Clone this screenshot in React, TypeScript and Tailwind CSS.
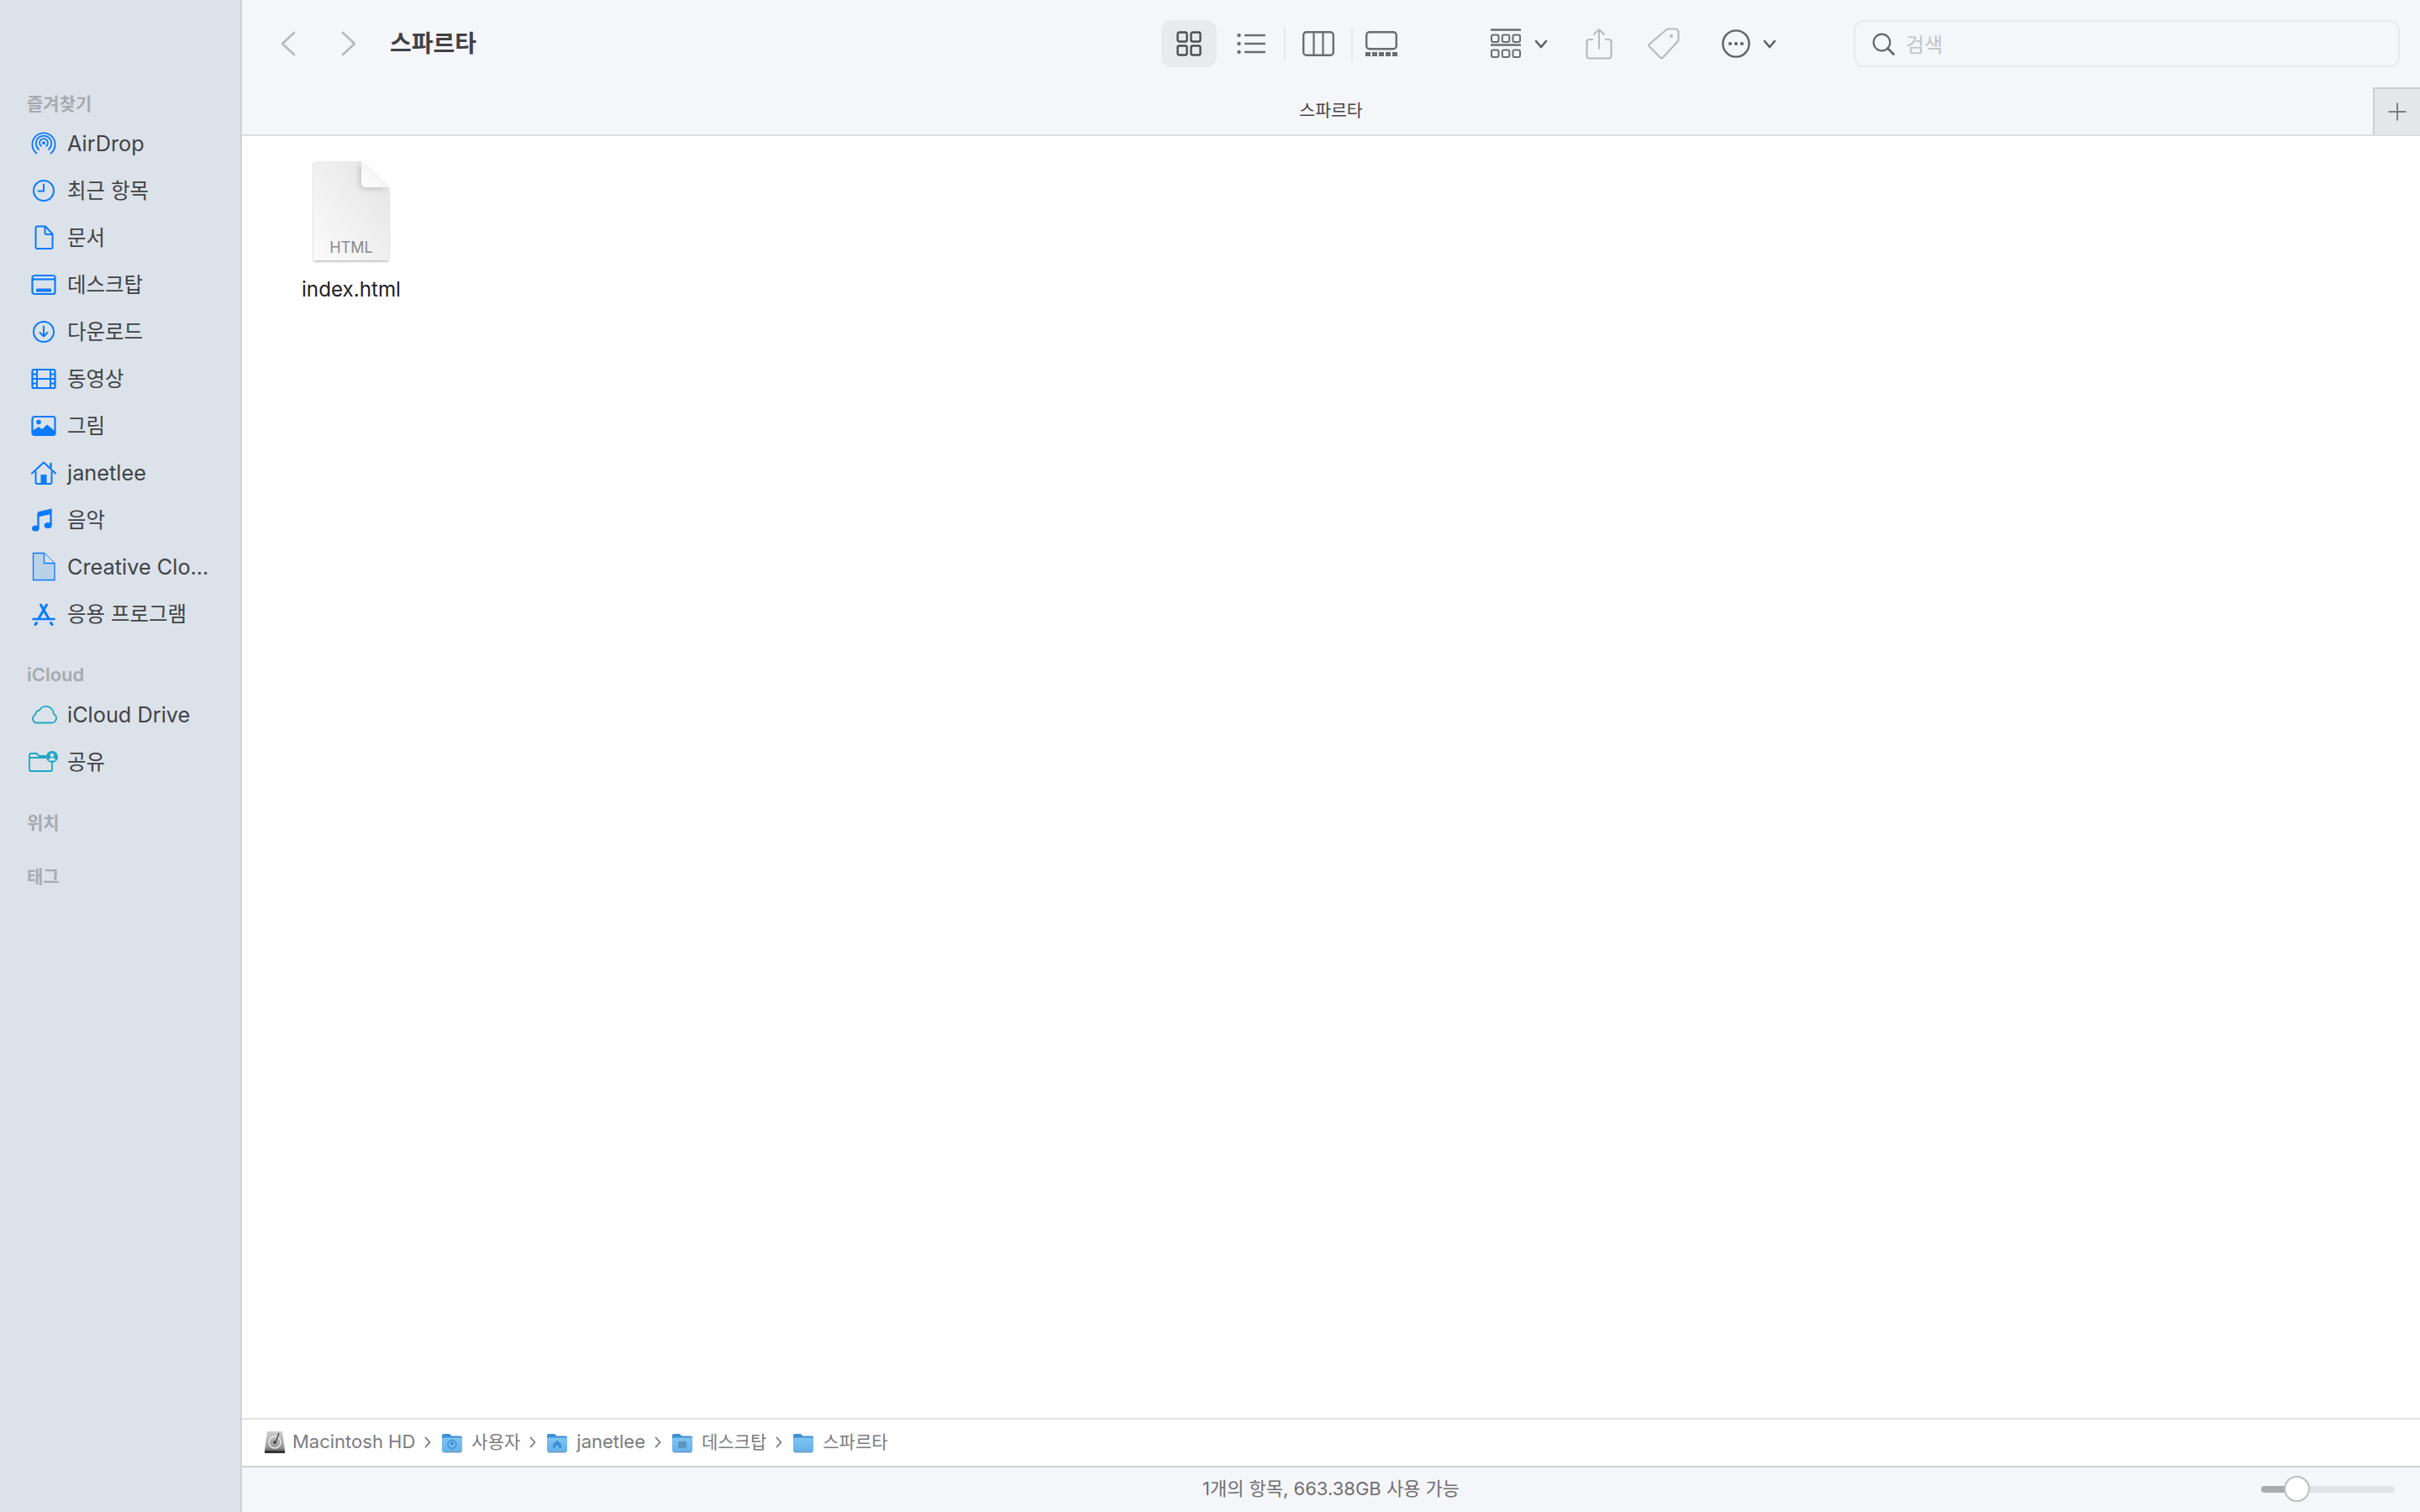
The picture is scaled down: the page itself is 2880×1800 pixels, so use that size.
import type { ReactNode } from "react";

const BLUE = "#0a7aff";
const TEAL = "#1ea6c6";

function Svg({ w = 32, h = 32, children }: { w?: number; h?: number; children: ReactNode }) {
  return (
    <svg width={w} height={h} viewBox={`0 0 ${w} ${h}`} fill="none" className="shrink-0 block">
      {children}
    </svg>
  );
}

// sidebar icons
const AirDropIcon = () => (
  <Svg>
    <g stroke={BLUE} strokeWidth="1.8" strokeLinecap="round">
      <path d="M7.5 27.5A13.6 13.6 0 1 1 24.5 27.5" />
      <path d="M10 22.8A9.2 9.2 0 1 1 22 22.8" />
      <path d="M12.8 18.8A4.9 4.9 0 1 1 19.2 18.8" />
    </g>
    <circle cx="16" cy="15.2" r="1.9" fill={BLUE} />
  </Svg>
);
const ClockIcon = () => (
  <Svg>
    <circle cx="16" cy="16" r="12" stroke={BLUE} strokeWidth="2" />
    <path d="M16 8.5V16.5H9.5" stroke={BLUE} strokeWidth="2" strokeLinecap="round" strokeLinejoin="round" />
  </Svg>
);
const DocIcon = () => (
  <Svg>
    <path d="M8.5 2.5H18L26.5 11.5V27A2 2 0 0 1 24.5 29H8.5A2 2 0 0 1 6.5 27V4.5A2 2 0 0 1 8.5 2.5Z" stroke={BLUE} strokeWidth="2" strokeLinejoin="round" />
    <path d="M17.5 3V10A2 2 0 0 0 19.5 12H26" stroke={BLUE} strokeWidth="2" />
  </Svg>
);
const DesktopIcon = () => (
  <Svg>
    <rect x="2.5" y="5" width="27" height="22" rx="2.5" stroke={BLUE} strokeWidth="2.2" />
    <path d="M3 9.5H29" stroke={BLUE} strokeWidth="2.2" />
    <rect x="7" y="20.5" width="18" height="4" rx="1" fill={BLUE} />
  </Svg>
);
const DownloadIcon = () => (
  <Svg>
    <circle cx="16" cy="16" r="12" stroke={BLUE} strokeWidth="2" />
    <path d="M16 9.5V21.5M11.5 17L16 21.5L20.5 17" stroke={BLUE} strokeWidth="2" strokeLinecap="round" strokeLinejoin="round" />
  </Svg>
);
const FilmIcon = () => (
  <Svg>
    <rect x="2.5" y="5" width="27" height="22" rx="1.5" stroke={BLUE} strokeWidth="2.2" />
    <path d="M8 5V27M24 5V27M8 16H24M3 10.5H8M3 16H8M3 21.5H8M24 10.5H29M24 16H29M24 21.5H29" stroke={BLUE} strokeWidth="2" />
  </Svg>
);
const PhotoIcon = () => (
  <Svg>
    <rect x="2.5" y="5" width="27" height="22" rx="2.5" stroke={BLUE} strokeWidth="2.2" />
    <circle cx="10" cy="11.5" r="2.8" fill={BLUE} />
    <path d="M3 26V21.5L10 17L14 20L20 14.5L29 22V26Z" fill={BLUE} />
  </Svg>
);
const HomeIcon = () => (
  <Svg>
    <path d="M2 16.5L16 3.5L30 16.5" stroke={BLUE} strokeWidth="2" strokeLinecap="round" strokeLinejoin="round" />
    <path d="M24.5 9V5" stroke={BLUE} strokeWidth="2.5" strokeLinecap="round" />
    <path d="M6.5 14V27A2 2 0 0 0 8.5 29H23.5A2 2 0 0 0 25.5 27V14" stroke={BLUE} strokeWidth="2" />
    <rect x="12.5" y="18" width="7" height="11" fill={BLUE} />
  </Svg>
);
const MusicIcon = () => (
  <Svg>
    <path d="M9.5 7.5L24.5 4V22" stroke={BLUE} strokeWidth="2.4" />
    <path d="M9.5 7.5V26" stroke={BLUE} strokeWidth="2.4" />
    <path d="M9.5 7.5L24.5 4V9L9.5 12.5Z" fill={BLUE} />
    <ellipse cx="6.3" cy="26" rx="4.3" ry="3.5" fill={BLUE} />
    <ellipse cx="21.1" cy="22.5" rx="4.5" ry="3.5" fill={BLUE} />
  </Svg>
);
const CloudDocIcon = () => (
  <svg width="32" height="36" viewBox="0 0 32 36" fill="none" className="shrink-0 block">
    <path d="M3.5 1.5H16.5L29 13.5V33.5H3.5Z" fill="#b9d2e9" stroke={BLUE} strokeWidth="1.3" />
    <path d="M16.5 1.5V13.5H29" fill="#dce2e9" stroke={BLUE} strokeWidth="1.3" />
  </svg>
);
const AppsIcon = () => (
  <Svg>
    <g stroke={BLUE} strokeLinecap="round">
      <path d="M19.5 5L10 21.5M7.5 26.5L6 28.5" strokeWidth="3" />
      <path d="M12.5 5L22 21.5M24.5 26.5L26 28.5" strokeWidth="3" />
      <path d="M3.5 22H28.5" strokeWidth="2.6" />
    </g>
  </Svg>
);
const CloudIcon = () => (
  <svg width="34" height="32" viewBox="0 0 34 32" fill="none" className="shrink-0 block">
    <path d="M8.5 25.5H26.5A5.5 5.5 0 0 0 28.8 15A9 9 0 0 0 12 10.5A6.5 6.5 0 0 0 7 16A5 5 0 0 0 8.5 25.5Z" stroke={TEAL} strokeWidth="1.8" strokeLinejoin="round" />
  </svg>
);
const SharedIcon = () => (
  <svg width="36" height="32" viewBox="0 0 36 32" fill="none" className="shrink-0 block">
    <path d="M1 8V25A2 2 0 0 0 3 27H26A2 2 0 0 0 28 25V17M1 11H21M1 8A2 2 0 0 1 3 6H9.5L12.5 9H21" stroke={TEAL} strokeWidth="1.8" strokeLinejoin="round" />
    <circle cx="28" cy="10" r="7" fill={TEAL} />
    <circle cx="28" cy="8" r="2.3" fill="#dce2e9" />
    <path d="M24 14.5A4 3.5 0 0 1 32 14.5Z" fill="#dce2e9" />
  </svg>
);

const FAVORITES = [
  { icon: AirDropIcon, label: "AirDrop", latin: true },
  { icon: ClockIcon, label: "최근 항목" },
  { icon: DocIcon, label: "문서" },
  { icon: DesktopIcon, label: "데스크탑" },
  { icon: DownloadIcon, label: "다운로드" },
  { icon: FilmIcon, label: "동영상" },
  { icon: PhotoIcon, label: "그림" },
  { icon: HomeIcon, label: "janetlee", latin: true },
  { icon: MusicIcon, label: "음악" },
  { icon: CloudDocIcon, label: "Creative Clo...", latin: true },
  { icon: AppsIcon, label: "응용 프로그램" },
];

const ICLOUD = [
  { icon: CloudIcon, label: "iCloud Drive", latin: true },
  { icon: SharedIcon, label: "공유" },
];

function SideHeading({ children, className = "" }: { children: ReactNode; className?: string }) {
  return (
    <div className={`h-[40px] pl-[32px] flex items-center font-semibold text-[#a5abb1] ${className}`}>
      {children}
    </div>
  );
}

function SideRow({ icon: Icon, label, latin }: { icon: () => ReactNode; label: string; latin?: boolean }) {
  return (
    <div className="h-[56px] pl-[36px] flex items-center text-[#3f4347]">
      <div className="w-[32px] flex justify-center">
        <Icon />
      </div>
      <span className={latin ? "ml-[12px] text-[25.3px]" : "ml-[12px] text-[24.5px]"}>{label}</span>
    </div>
  );
}

function Sidebar() {
  return (
    <aside className="w-[288px] shrink-0 bg-[#dce2e9] border-r-2 border-[#ced3d9] pt-[103px]">
      <SideHeading className="text-[21px] pt-[2px]">즐겨찾기</SideHeading>
      {FAVORITES.map((f) => (
        <SideRow key={f.label} icon={f.icon} label={f.label} latin={f.latin} />
      ))}
      <SideHeading className="mt-[24px] text-[22px]">iCloud</SideHeading>
      {ICLOUD.map((f) => (
        <SideRow key={f.label} icon={f.icon} label={f.label} latin={f.latin} />
      ))}
      <SideHeading className="mt-[25px] text-[21px]">위치</SideHeading>
      <SideHeading className="mt-[24px] text-[21px]">태그</SideHeading>
    </aside>
  );
}

// toolbar icons
const Chevron = ({ dir }: { dir: "left" | "right" }) => (
  <svg width="18" height="30" viewBox="0 0 18 30" fill="none" className="shrink-0 block">
    <path d={dir === "left" ? "M16 2L2 15L16 28" : "M2 2L16 15L2 28"} stroke="#b8b9bb" strokeWidth="2.6" strokeLinecap="round" strokeLinejoin="round" />
  </svg>
);
const SmallChevron = () => (
  <svg width="16" height="11" viewBox="0 0 16 11" fill="none" className="shrink-0 block">
    <path d="M2 2L8 9L14 2" stroke="#5f6064" strokeWidth="2.6" strokeLinecap="round" strokeLinejoin="round" />
  </svg>
);

function Toolbar() {
  return (
    <header className="bg-[#f5f6fa] border-b-2 border-[#dddee1] shrink-0">
      <div className="h-[104px] flex items-center">
        <div className="ml-[46px]">
          <Chevron dir="left" />
        </div>
        <div className="ml-[54px]">
          <Chevron dir="right" />
        </div>
        <div className="ml-[40px] w-[918px] text-[28px] leading-none font-semibold text-[#404144]">스파르타</div>

        <div className="w-[66px] h-[56px] rounded-[12px] bg-[#e9eaee] flex items-center justify-center">
          <svg width="30" height="30" viewBox="0 0 30 30" fill="none" className="block">
            <g stroke="#4d4e52" strokeWidth="2.4">
              <rect x="1.5" y="1.5" width="11" height="11" rx="2" />
              <rect x="17.5" y="1.5" width="11" height="11" rx="2" />
              <rect x="1.5" y="17.5" width="11" height="11" rx="2" />
              <rect x="17.5" y="17.5" width="11" height="11" rx="2" />
            </g>
          </svg>
        </div>
        <div className="ml-[24px]">
          <svg width="34" height="26" viewBox="0 0 34 26" fill="none" className="block">
            <g fill="#6b6c70">
              <circle cx="2.5" cy="3" r="2.2" />
              <circle cx="2.5" cy="13" r="2.2" />
              <circle cx="2.5" cy="23" r="2.2" />
            </g>
            <path d="M10 3H33M10 13H33M10 23H33" stroke="#6b6c70" strokeWidth="2.4" strokeLinecap="round" />
          </svg>
        </div>
        <div className="ml-[22px] w-[2px] h-[40px] bg-[#e6e7ea]" />
        <div className="ml-[20px]">
          <svg width="38" height="30" viewBox="0 0 38 30" fill="none" className="block">
            <rect x="1.2" y="1.2" width="35.6" height="27.6" rx="3.5" stroke="#6b6c70" strokeWidth="2.4" />
            <path d="M13.5 1V29M24.5 1V29" stroke="#6b6c70" strokeWidth="2.2" />
          </svg>
        </div>
        <div className="ml-[20px] w-[2px] h-[40px] bg-[#e6e7ea]" />
        <div className="ml-[15px]">
          <svg width="38" height="30" viewBox="0 0 38 30" fill="none" className="block">
            <rect x="1.2" y="1.2" width="35.6" height="20" rx="3.5" stroke="#6b6c70" strokeWidth="2.4" />
            <g fill="#6b6c70">
              <rect x="0" y="25" width="6" height="5" />
              <rect x="8" y="25" width="6" height="5" />
              <rect x="16" y="25" width="6" height="5" />
              <rect x="24" y="25" width="6" height="5" />
              <rect x="32" y="25" width="6" height="5" />
            </g>
          </svg>
        </div>

        <div className="ml-[111px]">
          <svg width="36" height="36" viewBox="0 0 36 36" fill="none" className="block">
            <path d="M0 1.5H36M0 19.5H36" stroke="#6b6c70" strokeWidth="2.4" />
            <g stroke="#6b6c70" strokeWidth="2">
              <rect x="1" y="7.5" width="8.5" height="8.5" rx="2" />
              <rect x="13.8" y="7.5" width="8.5" height="8.5" rx="2" />
              <rect x="26.5" y="7.5" width="8.5" height="8.5" rx="2" />
              <rect x="1" y="25.5" width="8.5" height="8.5" rx="2" />
              <rect x="13.8" y="25.5" width="8.5" height="8.5" rx="2" />
              <rect x="26.5" y="25.5" width="8.5" height="8.5" rx="2" />
            </g>
          </svg>
        </div>
        <div className="ml-[16px]">
          <SmallChevron />
        </div>
        <div className="ml-[45px]">
          <svg width="32" height="38" viewBox="0 0 32 38" fill="none" className="block">
            <path d="M9 14H4.5A3 3 0 0 0 1.5 17V33.5A3 3 0 0 0 4.5 36.5H27.5A3 3 0 0 0 30.5 33.5V17A3 3 0 0 0 27.5 14H23" stroke="#b9babc" strokeWidth="2.2" />
            <path d="M16 25V2M10 8L16 2L22 8" stroke="#b9babc" strokeWidth="2" strokeLinecap="round" strokeLinejoin="round" />
          </svg>
        </div>
        <div className="ml-[42px]">
          <svg width="38" height="38" viewBox="0 0 38 38" fill="none" className="block">
            <path d="M25 1.5H33A3.5 3.5 0 0 1 36.5 5V14A4 4 0 0 1 35.5 16.5L18 35.5A2 2 0 0 1 15 35.5L2 22.5A2 2 0 0 1 2 19.5L22 2.5A4 4 0 0 1 25 1.5Z" stroke="#b9babc" strokeWidth="2.2" strokeLinejoin="round" />
            <circle cx="28" cy="10" r="2" fill="#b9babc" />
          </svg>
        </div>
        <div className="ml-[50px]">
          <svg width="34" height="34" viewBox="0 0 34 34" fill="none" className="block">
            <circle cx="17" cy="17" r="15.6" stroke="#5f6064" strokeWidth="2.4" />
            <g fill="#5f6064">
              <circle cx="10" cy="17" r="2.1" />
              <circle cx="17" cy="17" r="2.1" />
              <circle cx="24" cy="17" r="2.1" />
            </g>
          </svg>
        </div>
        <div className="ml-[15px]">
          <SmallChevron />
        </div>

        <div className="ml-auto mr-[24px] w-[650px] h-[56px] rounded-[12px] border-2 border-[#e8e9ed] flex items-center pl-[20px]">
          <svg width="27" height="27" viewBox="0 0 27 27" fill="none" className="shrink-0 block">
            <circle cx="11.5" cy="11.5" r="9.8" stroke="#66676b" strokeWidth="2.2" />
            <path d="M18.5 18.5L25.5 25.5" stroke="#66676b" strokeWidth="2.8" strokeLinecap="round" />
          </svg>
          <span className="ml-[13px] pt-[3px] text-[24px] leading-none text-[#c2c3c6]">검색</span>
        </div>
      </div>
      <div className="h-[56px] grid grid-cols-[56px_1fr_56px]">
        <div />
        <div className="flex items-center justify-center text-[20.5px] text-[#45464a]">스파르타</div>
        <div className="bg-[#e6e7eb] border-l-2 border-t-2 border-[#cbccd0] flex items-center justify-center">
          <svg width="24" height="24" viewBox="0 0 24 24" fill="none" className="block">
            <path d="M12 1.5V22.5M1.5 12H22.5" stroke="#7d7e82" strokeWidth="2" />
          </svg>
        </div>
      </div>
    </header>
  );
}

function HtmlFile() {
  return (
    <div className="relative w-[94px] h-[124px]">
      <svg width="94" height="124" viewBox="0 0 94 124" fill="none" className="block">
        <defs>
          <linearGradient id="page" x1="0" y1="1" x2="1" y2="0">
            <stop offset="0" stopColor="#fbfbfb" />
            <stop offset="1" stopColor="#e4e4e4" />
          </linearGradient>
          <linearGradient id="fold" x1="0" y1="1" x2="1" y2="0">
            <stop offset="0" stopColor="#ffffff" />
            <stop offset="1" stopColor="#ececec" />
          </linearGradient>
          <filter id="soft" x="-10%" y="-10%" width="120%" height="120%">
            <feDropShadow dx="0" dy="1.5" stdDeviation="1.2" floodColor="#000" floodOpacity="0.28" />
          </filter>
          <filter id="foldShadow" x="-40%" y="-40%" width="180%" height="180%">
            <feDropShadow dx="-2" dy="2" stdDeviation="3" floodColor="#000" floodOpacity="0.18" />
          </filter>
        </defs>
        <path d="M5 2H59L92 33V117A3 3 0 0 1 89 120H5A3 3 0 0 1 2 117V5A3 3 0 0 1 5 2Z" fill="url(#page)" filter="url(#soft)" />
        <path d="M59 2V28A5 5 0 0 0 64 33H92Z" fill="url(#fold)" filter="url(#foldShadow)" />
      </svg>
      <span className="absolute left-0 right-0 top-[94px] text-center text-[18px] leading-[22px] text-[#8a8a8c]">HTML</span>
    </div>
  );
}

function Folder({ glyph }: { glyph?: "user" | "home" | "desk" }) {
  return (
    <svg width="26" height="26" viewBox="0 0 26 26" fill="none" className="shrink-0 block">
      <defs>
        <linearGradient id="folderBody" x1="0" y1="0" x2="0" y2="1">
          <stop offset="0" stopColor="#7fc4f3" />
          <stop offset="1" stopColor="#64b1e9" />
        </linearGradient>
      </defs>
      <path d="M1 5A2 2 0 0 1 3 3H10L12.5 5.5H23A2 2 0 0 1 25 7.5V12H1Z" fill="#3f8fd2" />
      <rect x="1" y="7.5" width="24" height="17" rx="1.5" fill="url(#folderBody)" />
      <path d="M2.5 24.8H23.5" stroke="#4a7ea8" strokeWidth="1" />
      {glyph === "user" && (
        <g stroke="#3f8fd2" strokeWidth="1.3">
          <circle cx="13" cy="15.5" r="5" />
          <circle cx="13" cy="14.5" r="1.4" fill="#3f8fd2" />
        </g>
      )}
      {glyph === "home" && <path d="M13 10.5L18 15.5V20H15V17H11V20H8V15.5Z" fill="#3f8fd2" />}
      {glyph === "desk" && <rect x="8" y="12" width="10" height="8" rx="1" fill="#5c96c4" />}
    </svg>
  );
}

function HardDrive() {
  return (
    <svg width="26" height="28" viewBox="0 0 26 28" fill="none" className="shrink-0 block">
      <defs>
        <linearGradient id="hd" x1="0" y1="0" x2="0" y2="1">
          <stop offset="0" stopColor="#d0d0d0" />
          <stop offset="0.7" stopColor="#9b9b9b" />
          <stop offset="1" stopColor="#4e4e4e" />
        </linearGradient>
      </defs>
      <path d="M4 1H22L25 24V27H1V24Z" fill="url(#hd)" />
      <circle cx="13" cy="14" r="7" stroke="#ececec" strokeWidth="1.5" />
      <circle cx="13" cy="14" r="2" fill="#4e4e4e" />
      <path d="M18 3L14 14" stroke="#3a3a3a" strokeWidth="1.2" />
      <rect x="1" y="24" width="24" height="3" fill="#333333" />
    </svg>
  );
}

const Sep = () => (
  <svg width="8" height="14" viewBox="0 0 8 14" fill="none" className="shrink-0 ml-[11px] mr-[12px] block">
    <path d="M1.5 1.5L6.5 7L1.5 12.5" stroke="#77787b" strokeWidth="1.8" strokeLinecap="round" strokeLinejoin="round" />
  </svg>
);

function PathBar() {
  return (
    <div className="h-[57px] shrink-0 border-t-2 border-[#e2e2e5] pl-[26px] pb-[2px] flex items-center text-[#7b7c7f] bg-white">
      <HardDrive />
      <span className="ml-[8px] text-[22px]">Macintosh HD</span>
      <Sep />
      <Folder glyph="user" />
      <span className="ml-[10px] text-[21px]">사용자</span>
      <Sep />
      <Folder glyph="home" />
      <span className="ml-[10px] text-[22px]">janetlee</span>
      <Sep />
      <Folder glyph="desk" />
      <span className="ml-[10px] text-[21px]">데스크탑</span>
      <Sep />
      <Folder />
      <span className="ml-[10px] text-[21px]">스파르타</span>
    </div>
  );
}

function StatusBar() {
  return (
    <div className="h-[55px] shrink-0 border-t-2 border-[#cfd0d4] bg-[#f5f6fa] pb-[2px] grid grid-cols-[1fr_auto_1fr] items-center">
      <div />
      <div className="text-[22px] text-[#6f7073]">1개의 항목, 663.38GB 사용 가능</div>
      <div className="flex justify-end pr-[30px]">
        <div className="relative w-[159px] h-[8px] rounded-full bg-[#e2e3e6]">
          <div className="w-[40px] h-[8px] rounded-full bg-[#a9aaac]" />
          <div className="absolute left-[27px] top-[-12px] w-[31px] h-[31px] rounded-full bg-white border-2 border-[#bcbdc0]" />
        </div>
      </div>
    </div>
  );
}

export default function App() {
  return (
    <div className="w-[2880px] h-[1800px] flex overflow-hidden bg-white font-['Inter','Noto_Sans_CJK_KR',sans-serif]">
      <Sidebar />
      <main className="flex-1 min-w-0 flex flex-col">
        <Toolbar />
        <div className="flex-1 min-h-0 bg-white pt-[28px] pl-[50px]">
          <div className="w-[160px] flex flex-col items-center">
            <HtmlFile />
            <span className="mt-[16px] text-[24.2px] leading-[30px] text-[#1f1f1f]">index.html</span>
          </div>
        </div>
        <PathBar />
        <StatusBar />
      </main>
    </div>
  );
}
